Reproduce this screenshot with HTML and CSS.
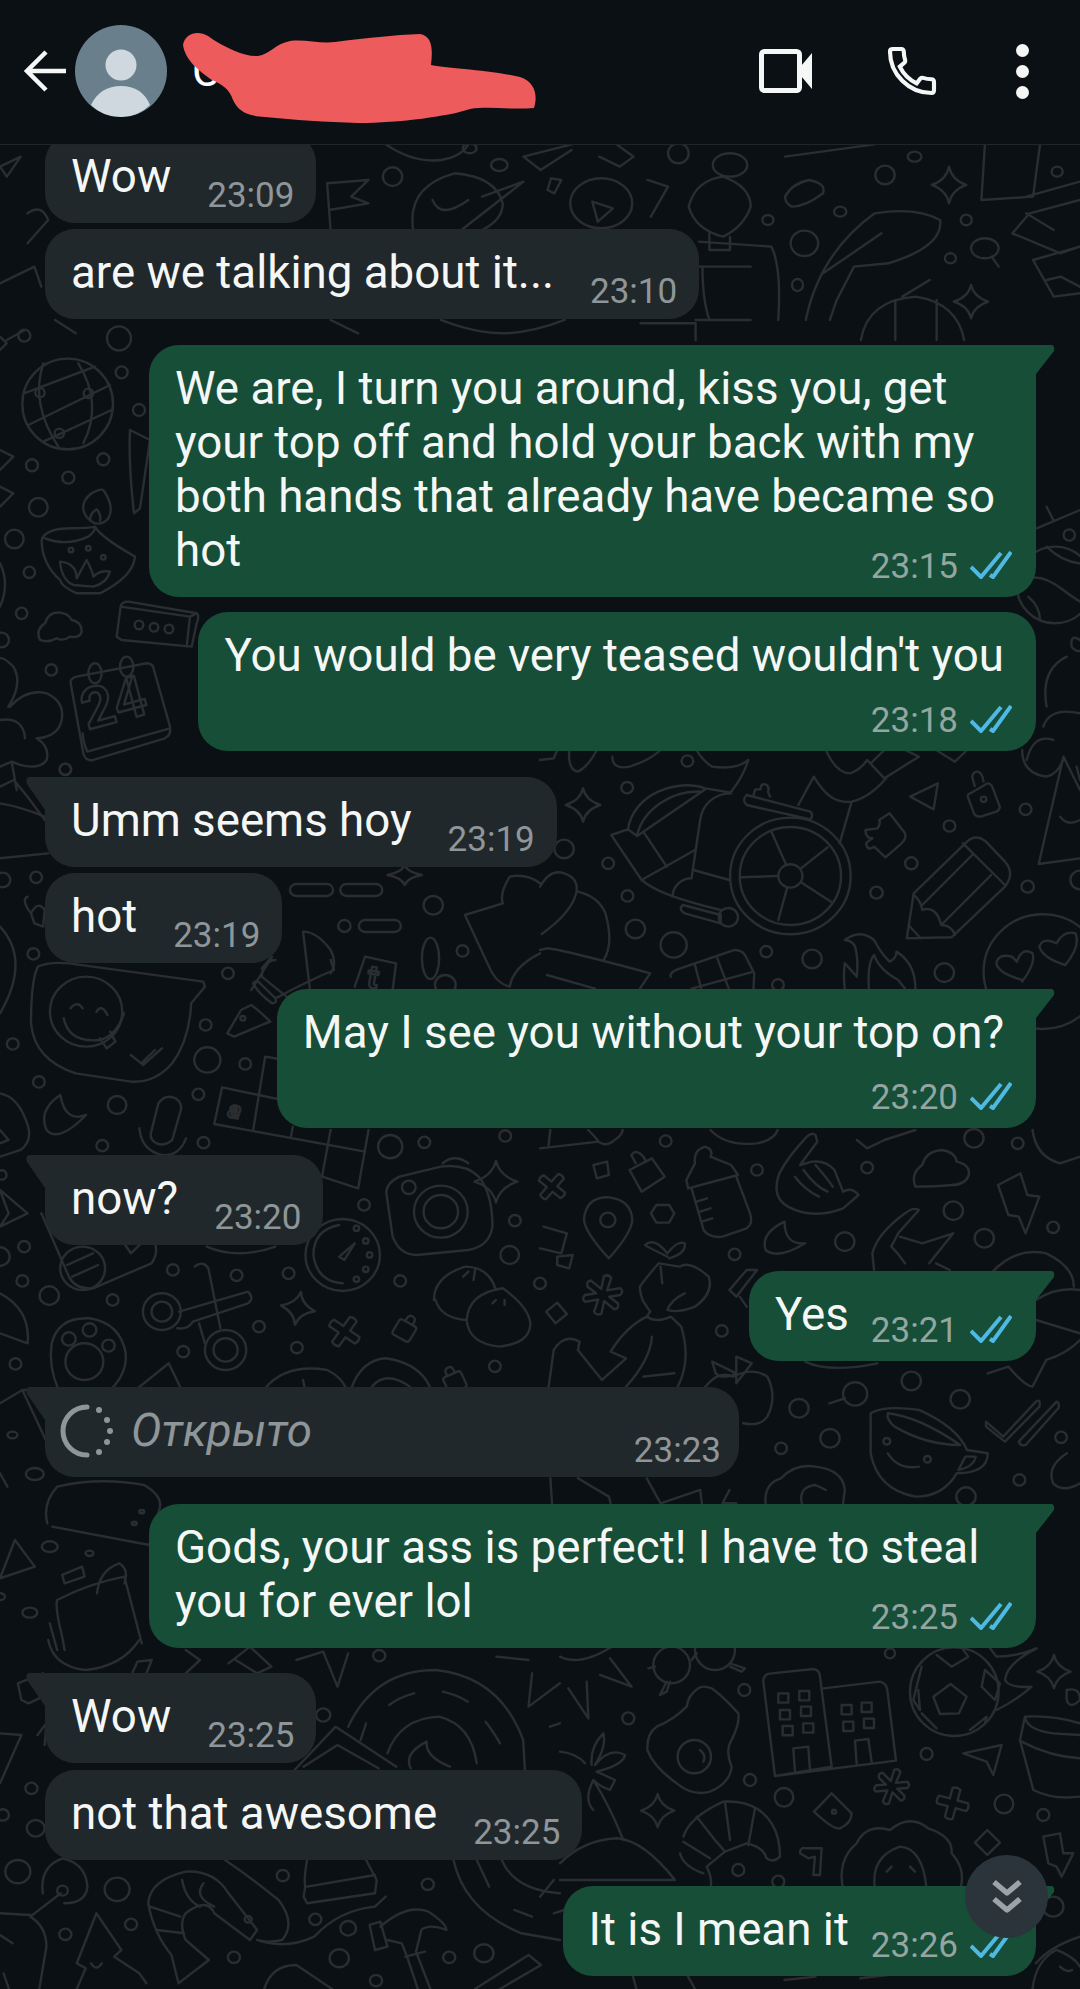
FILE: index.html
```html
<!DOCTYPE html>
<html>
    <head>
        <meta charset="utf-8">
        <title>Chat</title>
        <link rel="stylesheet" href="styles.css">
    </head>
    <body>
        <div class="page">
            <!-- wallpaper: paths are in the pixel units of each region, the group maps them to the page -->
            <svg class="doodles" width="1080" height="1989" viewBox="0 0 1080 1989">
                <defs>
                    <path id="spark" d="M0-50Q8-14 50 0Q8 14 0 50Q-8 14-50 0Q-8-14 0-50Z"/>
                    <path id="plus" d="M-12-45Q0-52 12-45V-12H45Q52 0 45 12H12V45Q0 52-12 45V12H-45Q-52 0-45-12H-12Z"/>
                    <path id="aster" d="M-10-50Q0-60 10-50L8-15L40-30Q52-25 45-12L18 0L45 12Q52 25 40 30L8 15L10 50Q0 60-10 50L-8 15L-40 30Q-52 25-45 12L-18 0L-45-12Q-52-25-40-30L-8-15Z"/>
                    <path id="lock" d="M-35-20Q-35-30-25-30H25Q35-30 35-20V25Q35 35 25 35H-25Q-35 35-35 25ZM-15-30V-42Q-15-58 0-58Q15-58 15-42V-30"/>
                </defs>

                <g transform="scale(.6887,.3333)">
                    <path d="M560 433Q600 490 640 480Q670 470 680 433M760 470L830 433M760 470L785 510L830 450M870 470L900 500L920 470L895 433M1140 470L1270 433M1430 435L1425 600L1500 590L1510 435M1495 640L1568 600M1495 640L1470 700L1540 760L1568 740"/>
                    <path d="M475 550L535 540L510 590L535 610L478 630M475 550L480 690"/>
                    <path d="M600 690Q590 560 660 520Q720 530 730 610Q730 660 700 690M628 600Q640 660 680 600M670 690L760 545L700 590"/>
                    <ellipse cx="873" cy="610" rx="45" ry="75"/>
                    <path d="M860 605L890 625L868 665Z"/>
                    <path d="M940 540L970 560L945 650M800 535L815 540L805 580L795 570Z"/>
                    <path d="M1000 620Q1010 540 1050 530Q1090 560 1090 620Q1080 680 1050 710Q1010 690 1000 620ZM1030 700V750H1060V710M1015 725L1120 740Q1135 800 1130 960M1010 960H1090M1010 800H1090M1030 960Q1020 900 1020 800"/>
                    <ellipse cx="1060" cy="495" rx="25" ry="35"/>
                    <path d="M1140 590Q1150 550 1175 540Q1200 550 1195 580Q1170 620 1150 620Q1140 610 1140 590Z"/>
                    <path d="M1170 960Q1190 760 1270 640Q1330 620 1365 660Q1370 740 1290 790L1240 800L1215 900L1205 960M1195 820L1280 700"/>
                    <path d="M1250 1020Q1260 900 1330 890Q1390 910 1400 1020M1310 890L1350 840M1300 900V1020M1360 900V1020"/>
                    <path d="M1490 590L1568 545M1490 640L1530 690"/>
                    <ellipse cx="1430" cy="745" rx="20" ry="30"/>
                    <path d="M1440 770L1450 800M1500 780L1568 740M1500 780L1530 890L1568 880M1520 840L1540 830L1568 860"/>
                    <path d="M640 960Q690 1000 730 1000Q770 1000 820 960M480 960L520 1000M930 970H1010V1020M80 960L110 1000M0 500L30 470L10 530ZM40 640Q60 610 70 660L40 730M0 850L50 800L60 860"/>
                    <ellipse cx="570" cy="530" rx="14" ry="28"/><ellipse cx="725" cy="495" rx="12" ry="18"/><ellipse cx="682" cy="445" rx="10" ry="15"/><ellipse cx="985" cy="460" rx="15" ry="30"/>
                    <ellipse cx="1285" cy="525" rx="14" ry="28"/><ellipse cx="1328" cy="470" rx="10" ry="15"/><ellipse cx="1220" cy="635" rx="9" ry="15"/><ellipse cx="1115" cy="660" rx="8" ry="15"/>
                    <ellipse cx="1380" cy="775" rx="8" ry="15"/><ellipse cx="1403" cy="660" rx="8" ry="16"/><ellipse cx="1535" cy="515" rx="8" ry="15"/><ellipse cx="1168" cy="730" rx="20" ry="38"/><ellipse cx="1158" cy="855" rx="8" ry="18"/>
                    <use href="#spark" transform="translate(1378,555) scale(.5,1.1)"/>
                    <use href="#spark" transform="translate(1410,905) scale(.5,1)"/>
                </g>

                <g transform="translate(700,500) scale(.3333)">
                    <circle cx="1065" cy="255" r="115"/>
                    <path d="M950 260Q1000 200 1090 270T1180 300M985 290Q1020 320 1020 360M1040 140Q1100 200 1180 190"/>
                    <circle cx="1108" cy="105" r="17"/>
                    <path d="M1010 85L1140 30M1060 60L1040 20M1140 420Q1110 400 1115 440Q1130 460 1150 450"/>
                    <path d="M1040 620Q1020 510 1100 470M980 780Q1000 700 1060 720M1140 640Q1050 620 1030 680M1130 800L1140 840"/>
                </g>

                <g transform="translate(0,330) scale(.3333)">
                    <circle cx="203" cy="222" r="136"/>
                    <path d="M72 190L285 110M85 285L330 165M130 335L335 240M130 100Q90 220 175 350M235 100Q310 220 250 340"/>
                    <circle cx="120" cy="188" r="14"/><circle cx="265" cy="190" r="14"/><circle cx="178" cy="310" r="14"/>
                    <circle cx="73" cy="17" r="18"/><circle cx="357" cy="25" r="36"/><circle cx="365" cy="127" r="18"/><circle cx="417" cy="240" r="18"/><circle cx="310" cy="388" r="18"/><circle cx="96" cy="406" r="18"/><circle cx="205" cy="443" r="18"/><circle cx="115" cy="532" r="28"/><circle cx="43" cy="627" r="28"/><circle cx="88" cy="727" r="17"/><circle cx="65" cy="850" r="17"/><circle cx="154" cy="1020" r="17"/><circle cx="196" cy="1318" r="17"/><circle cx="5" cy="930" r="22"/>
                    <path d="M285 580C245 560 235 520 275 490Q300 475 310 480Q345 530 325 565Q310 585 285 580M270 572Q270 550 290 538Q305 555 300 572"/>
                    <path d="M125 630Q135 595 215 595Q265 595 285 590Q300 620 405 680Q400 740 300 790H230Q185 770 180 750Q125 700 125 630ZM135 625Q200 650 265 620Q285 605 285 590M180 695Q230 700 230 745L260 690Q280 730 280 740Q300 720 330 725Q320 760 280 770L220 765Q185 750 180 695Z"/>
                    <circle cx="213" cy="660" r="7"/><circle cx="265" cy="655" r="7"/><circle cx="310" cy="682" r="7"/>
                    <path d="M120 930Q105 900 135 880Q145 845 180 848Q205 850 215 870Q245 875 245 905Q240 925 210 920Q190 935 170 925Q145 940 120 930Z"/>
                    <path d="M350 920L362 830Q365 815 385 815L590 850Q600 855 590 880L575 950L365 930ZM362 830L570 860L590 850M570 860L560 950"/>
                    <circle cx="417" cy="885" r="13"/><circle cx="462" cy="892" r="13"/><circle cx="507" cy="897" r="13"/>
                    <path d="M212 1060Q210 1045 230 1040L440 1000Q460 1000 462 1020L510 1190Q515 1215 495 1225L280 1290Q255 1295 250 1270ZM248 1210Q250 1240 262 1265L510 1195"/>
                    <ellipse cx="285" cy="1030" rx="20" ry="30"/><ellipse cx="380" cy="1010" rx="20" ry="30"/>
                    <text class="doodle-text" x="262" y="1200" font-size="170" transform="rotate(-15 262 1200)">24</text>
                    <path d="M390 300L450 330L420 535L402 550Q385 400 390 300M75 0L20 30M0 360L40 380L0 420M0 470L40 490L0 530M0 700Q30 760 0 830M0 20L20 40L0 60"/>
                    <path d="M25 1130Q70 1060 40 1010Q10 980 0 985M30 1130Q80 1075 140 1090Q195 1115 185 1170Q175 1220 110 1225Q150 1250 140 1290Q120 1320 60 1305L35 1295L0 1310M0 1170Q70 1160 75 1225M35 1295L50 1380"/>
                </g>

                <g transform="translate(540,750) scale(.3444,.3333)">
                    <circle cx="727" cy="378" r="175"/><circle cx="727" cy="378" r="147"/><circle cx="727" cy="378" r="35"/>
                    <path d="M672 245L715 345M835 292L758 355M845 455L760 398M692 510L718 412M585 382L690 378"/>
                    <path d="M255 240C270 130 400 85 480 115L555 128M282 255C300 180 380 120 470 125M207 255L255 238L282 258L480 118M207 255L295 390L450 300M300 245L368 350M295 390C330 420 385 445 525 480M555 130C500 130 470 170 465 210L440 385C410 385 385 410 385 440M445 360L550 390"/>
                    <path d="M600 135L785 185Q795 195 785 208L600 165Q585 150 600 135ZM620 135L625 118H640Q640 100 655 103Q668 110 662 125L668 140"/>
                    <path d="M415 465L525 495V520L420 490Q400 478 415 465"/>
                    <circle cx="547" cy="502" r="28"/>
                    <path d="M750 165L795 80C830 140 860 160 905 155C950 145 980 115 1005 85M905 155L870 280M555 125Q590 80 605 30Q570 60 500 50Q470 30 455 0M830 0Q860 70 900 70Q930 60 950 30L1000 85L1100 20L1060 0M960 40L1000 0"/>
                    <path d="M85 0Q80 60 110 65Q140 50 165 0M210 20Q210 60 260 50Q320 30 350 0M0 30L40 25L50 0"/>
                    <path d="M1240 275L1085 430L1065 565L1195 562L1350 410Q1380 370 1350 335L1295 275Q1265 250 1240 275ZM1228 280L1350 405M1255 315L1110 465M1310 375L1165 525M1085 435Q1105 450 1110 480Q1150 465 1165 525Q1195 525 1205 555M1070 525L1105 565"/>
                    <path d="M1015 190L1060 250Q1065 265 1050 280L1003 322L970 290Q950 305 947 280Q955 270 965 265Q945 265 945 240L980 235Q990 220 985 210Z"/>
                    <path d="M1250 130L1300 100Q1310 100 1315 115L1335 170Q1335 180 1325 185L1280 200Q1265 200 1260 190L1242 140Q1242 130 1250 130ZM1262 108L1255 80Q1258 63 1272 65Q1285 70 1288 95"/>
                    <circle cx="1288" cy="148" r="8"/>
                    <path d="M1075 140L1155 100L1143 178Z"/>
                    <use href="#spark" transform="translate(125,165)"/>
                    <circle cx="1460" cy="665" r="172"/>
                    <path d="M1400 690Q1330 670 1325 640Q1330 610 1370 620L1385 635Q1400 590 1430 610Q1440 640 1400 695ZM1525 645Q1460 625 1450 590Q1460 560 1500 580Q1520 540 1555 550Q1570 590 1525 645Z"/>
                    <path d="M0 410Q30 355 70 370Q115 385 105 430Q90 490 5 552M110 425Q170 440 190 490Q215 580 185 630M0 600L20 595Q50 595 320 670L290 716M20 675L160 716"/>
                    <path d="M380 680Q375 670 395 660L565 600Q585 600 595 615L622 670L620 716M450 645L468 716M515 625L548 716M440 716L620 665"/>
                    <path d="M885 570Q930 535 970 570Q990 610 1015 635Q1035 625 1035 605Q1090 640 1090 716M955 716Q950 640 970 615Q985 660 1040 690L1060 716M885 640L920 680Q925 630 915 590Q905 570 885 570M885 640Q880 680 885 716"/>
                    <path d="M1520 20L1448 342L1568 325M1520 20L1568 120M1400 0Q1400 70 1470 80Q1510 70 1520 20M1510 200Q1530 230 1568 210M1150 0L1205 35L1240 0"/>
                    <circle cx="253" cy="113" r="17"/><circle cx="428" cy="33" r="17"/><circle cx="70" cy="297" r="28"/><circle cx="198" cy="340" r="17"/><circle cx="254" cy="438" r="17"/><circle cx="277" cy="537" r="28"/><circle cx="388" cy="585" r="38"/><circle cx="657" cy="605" r="17"/><circle cx="790" cy="627" r="28"/><circle cx="691" cy="705" r="17"/><circle cx="1174" cy="668" r="28"/><circle cx="977" cy="428" r="18"/><circle cx="1078" cy="340" r="18"/><circle cx="1189" cy="228" r="17"/><circle cx="1410" cy="178" r="17"/><circle cx="1416" cy="410" r="18"/><circle cx="1568" cy="390" r="28"/>
                </g>

                <g transform="translate(0,760) scale(.3444,.3333)">
                    <circle cx="190" cy="28" r="17"/><circle cx="105" cy="352" r="17"/><circle cx="8" cy="360" r="22"/><circle cx="97" cy="582" r="17"/><circle cx="662" cy="640" r="17"/>
                    <path d="M0 80L40 60L80 110L130 180M0 130Q60 140 130 170M0 295L140 280M90 460Q60 420 80 410M90 460Q110 420 130 450L125 500L100 490ZM900 690L880 515Q920 515 960 570Q980 610 960 640M1030 680L1060 590L1150 610L1140 690"/>
                    <rect class="pill" x="842" y="372" width="125" height="36" rx="18"/><rect class="pill" x="988" y="372" width="122" height="36" rx="18"/><rect class="pill" x="1042" y="480" width="122" height="36" rx="18"/>
                    <circle cx="1000" cy="498" r="18"/><circle cx="1258" cy="436" r="28"/><circle cx="1343" cy="573" r="17"/>
                    <use href="#spark" transform="translate(1175,345) scale(1,.6)"/>
                    <ellipse cx="1250" cy="595" rx="25" ry="62"/>
                    <circle cx="1293" cy="675" r="30"/>
                    <path d="M1350 465L1460 430Q1450 400 1480 350Q1530 340 1568 370M1350 465L1420 620Q1440 670 1480 680Q1490 620 1568 580"/>
                    <text class="doodle-text" x="1062" y="680" font-size="95" transform="rotate(10 1062 680)">t</text>
                    <path d="M730 690L790 590Q760 620 760 650M760 650L880 750"/>
                    <path d="M0 500Q90 600 0 760"/>
                </g>

                <g transform="translate(0,960) scale(.3444,.3333)">
                    <path d="M110 20Q90 60 90 190Q100 300 220 340L380 365Q450 370 500 310Q550 240 555 130L595 80L590 65L200 10Q140 5 110 20Z"/>
                    <circle cx="250" cy="155" r="105"/>
                    <path d="M205 145Q225 120 240 145M280 155Q295 130 312 165M185 175Q200 250 290 240Q340 225 360 160M290 235L310 265L335 245L320 215M380 285L410 310L450 270M415 315L470 265"/>
                    <circle cx="37" cy="252" r="17"/><circle cx="113" cy="366" r="17"/><circle cx="597" cy="195" r="17"/><circle cx="602" cy="300" r="38"/><circle cx="712" cy="312" r="17"/><circle cx="576" cy="403" r="17"/><circle cx="340" cy="435" r="27"/><circle cx="591" cy="548" r="17"/><circle cx="297" cy="557" r="17"/><circle cx="1057" cy="735" r="17"/><circle cx="1133" cy="560" r="35"/><circle cx="1232" cy="547" r="17"/><circle cx="1467" cy="528" r="17"/><circle cx="1495" cy="782" r="17"/><circle cx="1480" cy="885" r="27"/><circle cx="1162" cy="963" r="17"/><circle cx="838" cy="940" r="17"/><circle cx="687" cy="946" r="17"/><circle cx="502" cy="930" r="17"/><circle cx="70" cy="860" r="17"/><circle cx="65" cy="963" r="17"/><circle cx="143" cy="1007" r="28"/><circle cx="327" cy="1020" r="17"/><circle cx="752" cy="1100" r="17"/><circle cx="862" cy="1163" r="17"/><circle cx="532" cy="1175" r="17"/><circle cx="45" cy="1212" r="17"/><circle cx="1437" cy="1219" r="17"/><circle cx="0" cy="890" r="28"/><circle cx="5" cy="645" r="14"/>
                    <path d="M175 405Q110 450 135 510Q170 550 250 465Q190 490 175 405Z"/>
                    <path d="M438 520L460 430Q480 400 510 415Q530 430 525 450L500 540Q480 560 455 550Q435 540 438 520ZM405 505Q410 570 470 585Q520 590 540 535"/>
                    <path d="M770 290L735 510M645 382L622 492L1060 575M645 382L820 420M770 290L810 297M960 510L935 650L1040 685L1070 510M850 500L845 530"/>
                    <text class="doodle-text" x="660" y="470" font-size="70" font-style="italic" transform="rotate(10 660 470)">a</text>
                    <path d="M660 220L700 150L730 135Q750 150 785 185L760 195L680 230ZM735 70Q745 55 760 75L800 115Q805 130 790 130Q750 100 735 70M760 25Q780 0 800 0M800 115Q900 60 970 30L960 0"/>
                    <circle cx="705" cy="175" r="7"/>
                    <path d="M0 400Q50 410 75 480Q100 540 60 570L0 590M0 510L25 540L0 550M0 690L80 760L0 800L25 760Z"/>
                    <path d="M1122 700Q1120 670 1160 650L1280 620Q1350 610 1390 650Q1430 700 1430 800Q1420 860 1360 870L1210 885Q1160 885 1140 830ZM1285 610Q1320 580 1360 610"/>
                    <circle cx="1280" cy="755" r="78"/><circle cx="1280" cy="755" r="50"/><circle cx="1187" cy="682" r="20"/>
                    <use href="#spark" transform="translate(1440,665) scale(1.25)"/>
                    <circle cx="995" cy="885" r="108"/>
                    <path d="M985 795Q910 810 910 885Q920 965 995 970M985 890L1030 850L1000 900Z"/>
                    <circle cx="1035" cy="805" r="8"/><circle cx="1062" cy="843" r="8"/><circle cx="1073" cy="885" r="8"/><circle cx="1062" cy="928" r="8"/><circle cx="1035" cy="958" r="8"/>
                    <path d="M1260 1020Q1260 950 1350 920Q1420 920 1440 990M1265 1020Q1280 1075 1355 1080M1355 1080Q1360 1000 1460 985Q1535 1040 1540 1090Q1540 1150 1450 1160Q1360 1150 1355 1080ZM1345 950L1360 935M1375 960L1380 925M1440 1020L1430 1030M1465 1035L1465 1020"/>
                    <circle cx="470" cy="1055" r="55"/><circle cx="470" cy="1055" r="30"/><circle cx="655" cy="1170" r="60"/><circle cx="655" cy="1170" r="35"/>
                    <path d="M565 920Q590 900 605 925L640 1105M520 1055L720 995Q740 1015 720 1030L560 1085Q545 1110 515 1105M578 1090L595 1150"/>
                    <path d="M150 1150Q170 1070 260 1075Q350 1090 365 1180Q370 1240 320 1290M150 1150Q140 1220 170 1290"/>
                    <circle cx="200" cy="1137" r="20"/><circle cx="260" cy="1110" r="20"/><circle cx="315" cy="1157" r="18"/><circle cx="245" cy="1205" r="55"/>
                    <use href="#spark" transform="translate(865,1045) rotate(10)"/>
                    <use href="#plus" transform="translate(1000,1115) rotate(35)"/>
                    <use href="#lock" transform="translate(1175,1110) rotate(30) scale(.8)"/>
                    <use href="#lock" transform="translate(1320,1265) rotate(-25) scale(.8)"/>
                    <path d="M120 760L200 950Q220 990 270 985L440 910Q460 880 450 850M195 915L270 880M210 950L285 915M360 850L380 880L410 850"/>
                    <circle cx="240" cy="925" r="65"/>
                    <path d="M600 860Q690 900 800 860M0 1000Q90 1050 80 1150L0 1120M70 1290L220 1285M400 1285L490 1210L525 1285M770 1285Q830 1210 950 1230Q990 1250 1005 1285M880 1260L885 1285M1020 1285Q1050 1200 1120 1195Q1220 1210 1250 1285M1080 1280Q1120 1230 1190 1280"/>
                </g>

                <g transform="translate(540,1120) scale(.3444,.3333)">
                    <use href="#plus" transform="translate(35,200) rotate(40) scale(.9)"/>
                    <path d="M260 150L325 115L362 170L295 215ZM278 130L265 105Q280 85 300 110L308 125"/>
                    <path d="M155 135L195 125L200 165L165 175Z"/>
                    <path d="M450 130Q445 90 480 80Q505 90 495 110L555 135L575 165L430 205L425 180ZM440 205L475 330Q490 355 530 350L600 325Q620 310 610 280L570 170M455 245L485 235M465 275L495 265M470 305L500 295"/>
                    <path d="M800 45Q790 35 775 50Q720 110 695 160Q670 230 720 260Q790 300 880 265L925 225Q905 200 880 215L855 150Q830 120 790 125L755 135L805 65ZM740 170Q770 210 810 230M765 150Q800 200 835 215M800 135Q830 170 850 200"/>
                    <path d="M1090 200Q1075 160 1110 135Q1120 95 1165 90Q1205 95 1210 125Q1250 135 1245 165Q1235 195 1195 195Q1150 200 1090 200Z"/>
                    <path d="M1330 195L1395 160L1415 225L1450 230L1410 340L1390 290L1360 285Z"/>
                    <path d="M200 415Q125 330 128 295Q135 230 200 232Q265 240 268 300Q265 340 200 415Z"/>
                    <circle cx="197" cy="300" r="22"/>
                    <path d="M338 255L375 255L390 280L375 308H338L322 280Z"/>
                    <path d="M10 320L78 340L62 400L0 385M50 410L95 405L85 445L50 435ZM18 575L50 548L78 582L45 610Z"/>
                    <use href="#aster" transform="translate(182,525) rotate(15) scale(1.1)"/>
                    <path d="M710 305Q640 340 655 390Q690 420 770 370Q710 375 710 305Z"/>
                    <path d="M1100 270Q1085 260 1060 280Q980 340 965 400L970 450M1100 270L1040 340L1020 380Q1040 400 1060 430M1045 350L1110 370L1200 340L1130 430M1150 430L1190 450"/>
                    <path d="M370 410Q310 380 305 375Q330 350 370 400Q400 360 420 370Q425 400 375 415M345 430Q310 470 290 500Q290 520 300 545L320 575L310 590Q340 610 380 590L410 620Q440 720 400 800M345 430L405 440Q435 420 490 470Q505 520 450 560Q400 580 370 570Q380 540 420 520M350 440L355 490M310 590Q250 620 205 695L250 715L180 780L110 690L115 665Q70 640 40 690L25 800M300 770L390 760M325 650Q320 720 250 800"/>
                    <path d="M600 450L630 450L570 530L550 510ZM580 530L600 560"/>
                    <path d="M480 800Q520 750 560 770Q620 740 660 770Q690 830 660 890Q640 920 590 910M500 725L570 760Q530 780 510 760ZM570 710L615 730L570 790Z"/>
                    <circle cx="915" cy="822" r="35"/>
                    <path d="M885 835L840 850M770 725Q840 760 980 730"/>
                    <circle cx="365" cy="63" r="17"/><circle cx="630" cy="150" r="17"/><circle cx="950" cy="143" r="17"/><circle cx="565" cy="403" r="17"/><circle cx="528" cy="633" r="17"/><circle cx="1260" cy="55" r="28"/><circle cx="1387" cy="70" r="17"/><circle cx="1200" cy="272" r="28"/><circle cx="885" cy="365" r="28"/><circle cx="1290" cy="355" r="28"/><circle cx="1490" cy="322" r="17"/><circle cx="1078" cy="783" r="28"/><circle cx="1220" cy="838" r="28"/><circle cx="752" cy="865" r="28"/><circle cx="842" cy="955" r="28"/><circle cx="700" cy="985" r="17"/><circle cx="1513" cy="952" r="17"/><circle cx="1392" cy="1080" r="17"/><circle cx="1237" cy="1130" r="28"/><circle cx="0" cy="490" r="17"/>
                    <path d="M960 880Q1000 855 1100 870Q1210 920 1240 990L1300 1000Q1300 1060 1210 1060Q1170 1130 1090 1130Q980 1110 960 1000ZM1010 880Q1100 890 1220 975Q1120 975 1030 920Q1005 900 1010 880ZM1010 1000Q1040 1050 1100 1040M1215 1050L1235 1010H1265Q1260 1040 1215 1050"/>
                    <circle cx="1007" cy="964" r="10"/><circle cx="1125" cy="1018" r="10"/>
                    <path d="M1295 905L1345 950L1440 845Q1455 835 1450 860L1350 965L1295 920ZM1390 965L1500 845Q1510 850 1505 865L1410 975Q1395 980 1390 965Z"/>
                    <path d="M655 1150Q650 1090 700 1075Q740 1030 800 1040Q880 1050 885 1110L880 1150M760 1150Q750 1100 800 1095L830 1110"/>
                    <path d="M1530 1000Q1470 1040 1490 1090Q1520 1120 1568 1090"/>
                    <path d="M1310 460Q1380 380 1470 400Q1550 440 1550 500M1440 540Q1500 500 1568 510M1440 600L1568 640M1300 760L1360 740Q1410 800 1430 800L1470 720Q1530 700 1568 660"/>
                    <path d="M495 30Q540 80 630 70Q680 60 690 30M0 85L170 65Q190 80 210 65Q240 45 240 30M140 30Q160 50 170 65M30 30L25 75M920 60L950 85L1000 60L1090 30M1430 30Q1440 110 1510 130L1568 110"/>
                    <path d="M30 1075L35 1150M110 1075L200 1130L205 1150M310 1075L350 1150L465 1110L470 1150M550 1110L530 1150L570 1150"/>
                </g>

                <g transform="translate(0,1370) scale(.4974,.3333)">
                    <path d="M45 60L95 220M45 60L0 100M95 460Q85 400 115 350Q200 320 290 345Q330 380 320 420L300 525L105 470M115 690Q110 710 125 800L130 840M115 690Q180 640 250 620L285 820M125 615L165 590L170 620L130 640ZM195 670Q200 600 240 580Q260 600 250 640M0 625L30 510L70 590ZM0 310L15 350M100 760L115 840"/>
                    <circle cx="70" cy="312" r="18"/><circle cx="25" cy="195" r="10"/><circle cx="100" cy="530" r="16"/><circle cx="180" cy="550" r="8"/><circle cx="60" cy="728" r="15"/><circle cx="0" cy="680" r="10"/>
                    <circle cx="270" cy="460" r="5"/><circle cx="285" cy="425" r="5"/>
                </g>

                <g transform="translate(0,1640) scale(.3571,.3333)">
                    <path d="M975 260Q1050 90 1220 90Q1400 110 1465 300L1470 390M1090 195Q1120 170 1160 160M1240 155Q1280 165 1310 185M1360 245Q1385 280 1400 310M1025 250L1010 300M1085 340Q1120 235 1230 230Q1320 255 1335 370M1150 385Q1130 340 1195 305Q1190 350 1260 380"/>
                    <path d="M1270 660Q1300 810 1460 880L1568 900M1335 660L1370 740M1405 660Q1440 750 1568 760M1440 810L1490 830"/>
                    <path d="M825 390L940 260L1110 380M850 380L945 315L1060 385"/>
                    <path d="M860 660Q850 720 855 740L850 770L860 790L1050 760L1055 720L1025 660M860 740L1050 705"/>
                    <path d="M415 790Q420 720 520 695Q600 690 640 760L720 870L700 900L600 820Q580 770 520 820Q500 850 520 900L585 960L500 1030L480 945Q430 880 415 790ZM510 720Q520 780 560 800M570 730Q540 770 600 800M420 800L505 830M440 870L515 880"/>
                    <path d="M630 660Q700 710 780 780Q830 850 790 900Q750 910 720 900M720 900Q800 930 880 890Q950 810 1050 800L1080 770"/>
                    <circle cx="695" cy="838" r="10"/>
                    <path d="M1035 855L1065 845L1085 920L1050 930ZM1065 860Q1140 790 1200 815Q1250 850 1250 870Q1200 850 1180 870L1165 935L1205 1047M1085 900L1125 910L1140 950L1170 1047M1135 950L1190 935"/>
                    <path d="M270 820L340 930L320 950L390 1000L410 1030M270 820L215 970L240 985L215 1047M255 970Q270 995 285 970"/>
                    <path d="M85 830Q130 860 130 920L110 1047M85 830L170 760M120 760Q110 680 175 655Q240 670 245 740Q240 790 180 790M0 820L85 825M0 885L35 910M10 1000L25 1047"/>
                    <circle cx="175" cy="752" r="15"/>
                    <circle cx="50" cy="695" r="35"/><circle cx="328" cy="748" r="35"/><circle cx="88" cy="445" r="17"/><circle cx="8" cy="525" r="17"/><circle cx="100" cy="565" r="25"/><circle cx="367" cy="853" r="17"/><circle cx="183" cy="883" r="17"/><circle cx="792" cy="707" r="17"/><circle cx="883" cy="838" r="17"/><circle cx="1198" cy="733" r="17"/><circle cx="1062" cy="47" r="17"/><circle cx="975" cy="865" r="22"/><circle cx="655" cy="952" r="17"/><circle cx="950" cy="955" r="27"/><circle cx="1258" cy="952" r="17"/><circle cx="1355" cy="940" r="27"/><circle cx="1053" cy="1022" r="17"/><circle cx="905" cy="225" r="20"/>
                    <path d="M135 0Q150 80 240 90Q340 80 390 0M370 100L385 65L425 60L410 100M520 30L560 60L520 100M640 70L700 20L760 80L720 100L660 60M830 60L905 35L945 140L975 40M50 130L120 100L120 170L80 190L60 180ZM0 280L60 285L0 430M105 285L130 250L125 315"/>
                    <path d="M1330 1047L1480 945L1515 975L1400 1047M740 1047Q760 975 830 975L930 1047M1390 50L1480 60M1490 100L1480 200L1568 130M1568 250L1540 260"/>
                </g>

                <g transform="translate(560,1640) scale(.3333)">
                    <circle cx="335" cy="75" r="55"/><circle cx="465" cy="30" r="60"/>
                    <path d="M395 60L410 40M265 85L285 80M320 125L300 165L320 155L330 125M510 70L555 85L545 95L510 80"/>
                    <path d="M150 55L215 140L120 105M25 145L85 235L80 125M0 50Q60 80 155 20"/>
                    <path d="M415 145Q385 165 380 200Q340 240 290 260Q260 280 262 330Q280 380 350 430Q400 470 450 455Q510 430 515 380Q495 330 515 300Q540 250 535 220Q490 170 455 145Q430 135 415 145Z"/>
                    <circle cx="403" cy="350" r="50"/>
                    <path d="M420 330Q440 345 430 365"/>
                    <path d="M610 125Q610 100 635 100L760 87Q780 90 780 110L815 380L645 408ZM790 145L960 125Q980 130 982 150L1008 362L645 408M705 395L700 325L745 320L750 390M890 370L885 302L925 297L935 365"/>
                    <path d="M655 160h30v28h-30zM718 153h30v28h-30zM660 210h30v28h-30zM723 200h30v28h-30zM668 258h30v28h-30zM730 250h30v28h-30zM845 195h30v28h-30zM905 188h30v28h-30zM850 245h30v28h-30zM912 236h30v28h-30z"/>
                    <circle cx="1183" cy="155" r="133"/>
                    <path d="M1172 132L1220 170L1197 220L1140 222L1120 170ZM1130 45L1175 80L1225 50L1205 22M1275 90L1320 130L1305 180L1265 140ZM1085 80L1060 180L1080 210L1075 150M1085 220L1130 265M1230 270L1280 230L1275 250"/>
                    <path d="M1290 25L1310 50Q1370 50 1430 25Q1340 70 1335 120Q1350 145 1415 140Q1370 180 1310 210"/>
                    <use href="#spark" transform="translate(1482,95)"/>
                    <use href="#spark" transform="translate(293,512)"/>
                    <path d="M1395 230L1380 300L1420 450Q1480 480 1560 470M1395 230Q1480 225 1560 250M1385 305Q1470 350 1560 355M1395 230Q1400 270 1480 280L1560 285"/>
                    <path d="M1210 340L1325 315L1300 405L1280 365Z"/>
                    <use href="#aster" transform="translate(995,440) rotate(20)"/>
                    <use href="#plus" transform="translate(1178,490) rotate(15)"/>
                    <path d="M762 515L815 460L875 520Q875 550 840 565Q820 570 762 515Z"/>
                    <circle cx="822" cy="515" r="6"/>
                    <path d="M95 375Q90 320 130 280Q140 320 105 375Q150 320 195 345Q190 375 110 395L165 420L150 450Q120 440 100 420Q70 480 100 510M100 420Q150 500 190 600M0 335Q50 340 75 370M0 720H345Q250 600 170 595Q70 600 0 670"/>
                    <path d="M370 590Q390 530 490 485Q590 480 635 550Q660 590 660 650Q640 670 620 655Q610 620 560 610L495 635L440 680Q460 720 450 750M410 530L465 600L495 635M495 485L510 600M585 505L565 615M370 605L450 655M360 640Q370 680 430 700"/>
                    <circle cx="553" cy="150" r="18"/><circle cx="205" cy="235" r="18"/><circle cx="570" cy="420" r="18"/><circle cx="672" cy="472" r="28"/><circle cx="1100" cy="342" r="18"/><circle cx="1332" cy="492" r="28"/><circle cx="1450" cy="525" r="18"/><circle cx="535" cy="690" r="18"/><circle cx="655" cy="725" r="18"/><circle cx="990" cy="40" r="15"/>
                    <path d="M850 750Q830 660 890 610Q920 550 990 570Q1050 520 1105 565Q1180 590 1175 640Q1220 690 1200 750M945 750Q930 650 1020 620Q1090 625 1100 750M980 695L995 680M1050 680L1065 695"/>
                    <path d="M720 640Q720 620 740 625L785 625L780 705L760 705L765 650L745 655Z"/>
                    <path d="M1282 570L1320 608L1282 645L1245 608Z"/>
                    <path d="M1450 590L1500 580L1510 640L1540 640L1505 710L1490 680L1465 670Z"/>
                    <path d="M1520 150Q1560 140 1560 180Q1530 210 1520 180Z"/>
                </g>

                <g transform="translate(540,1780) scale(.3444,.3333)">
                    <circle cx="1490" cy="380" r="30"/>
                    <path d="M1440 550Q1480 500 1568 470M1430 627Q1440 540 1500 510Q1550 530 1568 560M1510 560Q1530 580 1545 570M0 350L40 300M710 600L800 590M930 595L1010 585M40 400L70 390M270 590L280 627M430 590L450 627"/>
                </g>
            </svg>

            <header class="topbar">
                <svg class="back" width="42" height="42" viewBox="0 0 42 42">
                    <path d="M42 21H3M22 2L3 21L22 40"/>
                </svg>
                <svg class="avatar" width="92" height="92" viewBox="0 0 92 92">
                    <circle cx="46" cy="46" r="46" fill="#6a7f8c"/>
                    <circle cx="46" cy="40" r="15.5" fill="#cfd8de"/>
                    <path d="M16 80Q25 61 46 61Q67 61 75 80Q63 92 46 92Q28 92 16 80Z" fill="#cfd8de"/>
                </svg>
                <span class="name">C</span>
                <svg class="scribble" width="380" height="110" viewBox="170 25 380 110">
                    <path d="M183 45C185 33 198 30 208 36C225 48 245 57 258 56C270 54 275 44 290 41C305 39 320 44 335 42C365 38 395 35 420 34C432 36 433 48 431 65C445 68 490 70 520 77C535 82 538 95 534 108C510 110 490 106 470 109C450 116 400 123 358 123C325 122 295 120 265 117C245 116 238 110 233 100C230 90 222 84 212 80C200 72 185 60 183 45Z"/>
                </svg>
                <div class="actions">
                    <svg class="ico-video" width="54" height="44" viewBox="0 0 54 44">
                        <rect x="2.5" y="2.5" width="38" height="39" rx="3"/>
                        <path class="solid" d="M42 17L53 4V40L42 27Z"/>
                    </svg>
                    <svg class="ico-phone" width="44" height="44" viewBox="3 3 18 18">
                        <path d="M20.01 15.38c-1.23 0-2.42-.2-3.53-.56-.35-.12-.74-.03-1.01.24l-1.57 1.97c-2.83-1.35-5.48-3.9-6.89-6.83l1.95-1.66c.27-.28.35-.67.24-1.02-.37-1.11-.56-2.3-.56-3.53 0-.54-.45-.99-.99-.99H4.19C3.65 3 3 3.24 3 3.99 3 13.28 10.73 21 20.01 21c.71 0 .99-.63.99-1.18v-3.45c0-.54-.45-.99-.99-.99z"/>
                    </svg>
                    <div class="menu"><i></i><i></i><i></i></div>
                </div>
            </header>

            <main class="chat">
                <div class="msg in first">
                    <span class="text">Wow</span>
                    <span class="meta"><span class="time">23:09</span></span>
                </div>
                <div class="msg in same">
                    <span class="text">are we talking about it...</span>
                    <span class="meta"><span class="time">23:10</span></span>
                </div>

                <div class="msg out tail stack wide">
                    <span class="text">We are, I turn you around, kiss you, get<br>your top off and hold your back with my<br>both hands that already have became so<br>hot</span>
                    <span class="meta over"><span class="time">23:15</span><svg class="ticks" width="42" height="28" viewBox="0 0 42 28"><path d="M1 16L11 26L31 2M20 24L23 26L41 1"/></svg></span>
                </div>
                <div class="msg out stack near">
                    <span class="text">You would be very teased wouldn't you</span>
                    <span class="meta"><span class="time">23:18</span><svg class="ticks" width="42" height="28" viewBox="0 0 42 28"><path d="M1 16L11 26L31 2M20 24L23 26L41 1"/></svg></span>
                </div>

                <div class="msg in tail">
                    <span class="text">Umm seems hoy</span>
                    <span class="meta"><span class="time">23:19</span></span>
                </div>
                <div class="msg in same">
                    <span class="text">hot</span>
                    <span class="meta"><span class="time">23:19</span></span>
                </div>

                <div class="msg out tail stack">
                    <span class="text">May I see you without your top on?</span>
                    <span class="meta"><span class="time">23:20</span><svg class="ticks" width="42" height="28" viewBox="0 0 42 28"><path d="M1 16L11 26L31 2M20 24L23 26L41 1"/></svg></span>
                </div>

                <div class="msg in tail more">
                    <span class="text">now?</span>
                    <span class="meta"><span class="time">23:20</span></span>
                </div>

                <div class="msg out tail">
                    <span class="text">Yes</span>
                    <span class="meta"><span class="time">23:21</span><svg class="ticks" width="42" height="28" viewBox="0 0 42 28"><path d="M1 16L11 26L31 2M20 24L23 26L41 1"/></svg></span>
                </div>

                <div class="msg in tail opened">
                    <span class="viewed">
                        <svg class="spin" width="54" height="54" viewBox="0 0 54 54">
                            <path d="M27 3A24 24 0 0 0 27 51"/>
                            <circle cx="39" cy="6" r="3"/><circle cx="47" cy="16" r="3"/><circle cx="50" cy="27" r="3"/><circle cx="47" cy="38" r="3"/><circle cx="39" cy="48" r="3"/>
                        </svg>
                        <em class="viewed-label">Открыто</em>
                    </span>
                    <span class="meta"><span class="time">23:23</span></span>
                </div>

                <div class="msg out tail stack wide more">
                    <span class="text">Gods, your ass is perfect! I have to steal<br>you for ever lol</span>
                    <span class="meta over"><span class="time">23:25</span><svg class="ticks" width="42" height="28" viewBox="0 0 42 28"><path d="M1 16L11 26L31 2M20 24L23 26L41 1"/></svg></span>
                </div>

                <div class="msg in tail less">
                    <span class="text">Wow</span>
                    <span class="meta"><span class="time">23:25</span></span>
                </div>
                <div class="msg in same wider">
                    <span class="text">not that awesome</span>
                    <span class="meta"><span class="time">23:25</span></span>
                </div>

                <div class="msg out tail">
                    <span class="text">It is I mean it</span>
                    <span class="meta"><span class="time">23:26</span><svg class="ticks" width="42" height="28" viewBox="0 0 42 28"><path d="M1 16L11 26L31 2M20 24L23 26L41 1"/></svg></span>
                </div>

                <button class="to-bottom">
                    <svg width="32" height="36" viewBox="0 0 32 36"><path d="M3 3L16 14L29 3M3 20L16 31L29 20"/></svg>
                </button>
            </main>
        </div>
    </body>
</html>
```

FILE: styles.css
```css
* {
    box-sizing: border-box;
}
html, body {
    margin: 0;
    padding: 0;
    background: #0b1014;
}
.page {
    position: relative;
    width: 1080px;
    height: 1989px;
    overflow: hidden;
    font-family: Roboto, "Liberation Sans", sans-serif;
    color: #f4f7f6;
}

/* wallpaper */
.doodles {
    position: absolute;
    left: 0;
    top: 0;
}
.doodles * {
    fill: none;
    stroke: #2a2e31;
    stroke-width: 2.4px;
    stroke-linejoin: round;
    stroke-linecap: round;
    vector-effect: non-scaling-stroke;
}
.doodle-text {
    font-family: Roboto, sans-serif;
    font-weight: 700;
}

/* top bar */
.topbar {
    position: relative;
    z-index: 2;
    display: flex;
    align-items: center;
    height: 145px;
    padding: 0 51px 2px 24px;
    background: #0b1014;
    border-bottom: 1px solid #1f2528;
}
.back {
    fill: none;
    stroke: #f4f7f6;
    stroke-width: 4.5px;
    margin-right: 9px;
}
.avatar {
    margin-right: 25px;
}
.name {
    font-size: 44px;
    color: #fff;
}
.scribble {
    position: absolute;
    left: 170px;
    top: 25px;
    fill: #ee5b5d;
}
.actions {
    display: flex;
    align-items: center;
    margin-left: auto;
}
.actions svg {
    fill: none;
    stroke: #f4f7f6;
    overflow: visible;
}
.ico-video {
    stroke-width: 5px;
    margin-right: 77px;
}
.ico-video .solid {
    fill: #f4f7f6;
    stroke: none;
}
.ico-phone {
    stroke-width: 1.7px;
    margin-right: 82px;
}
.menu {
    display: flex;
    flex-direction: column;
    gap: 8px;
}
.menu i {
    display: block;
    width: 13px;
    height: 13px;
    border-radius: 50%;
    background: #f4f7f6;
}

/* messages */
.chat {
    position: relative;
    z-index: 1;
    display: flex;
    flex-direction: column;
    align-items: flex-start;
    padding: 0 44px 0 45px;
}
.msg {
    position: relative;
    display: flex;
    align-items: flex-end;
    margin-top: 26px;
    padding: 17px 22px 0 26px;
    border-radius: 30px;
    white-space: nowrap;
}
.msg.first {
    margin-top: -12px;
}
.msg.same {
    margin-top: 6px;
}
.msg.near {
    margin-top: 15px;
}
.msg.more {
    margin-top: 27px;
}
.msg.less {
    margin-top: 25px;
}
.msg.wider {
    margin-top: 7px;
}
.in {
    background: #21282b;
}
.out {
    align-self: flex-end;
    background: #164e38;
    padding-right: 24px;
}
.text {
    display: block;
    font-size: 45.7px;
    line-height: 54px;
    margin-bottom: 19px;
}
.meta {
    display: flex;
    align-items: flex-start;
    gap: 12px;
    margin-left: 36px;
    padding-bottom: 7px;
}
.out .meta {
    margin-left: 22px;
    padding-bottom: 10px;
}
.time {
    font-size: 35px;
    line-height: 40px;
    color: #8f9699;
}
.out .time {
    color: #95a6a0;
}
.ticks {
    margin-top: 4px;
    fill: none;
    stroke: #4fb8e3;
    stroke-width: 4px;
}

/* tails */
.tail.in {
    border-top-left-radius: 0;
}
.tail.out {
    border-top-right-radius: 0;
}
.tail::before {
    content: "";
    position: absolute;
    top: 0;
    width: 22px;
    height: 34px;
    background: inherit;
}
.tail.in::before {
    left: -19px;
    clip-path: path("M3 0L22 0L22 34L19 33L1 7Q-1 1 3 0Z");
}
.tail.out::before {
    right: -19px;
    clip-path: path("M0 0L19 0Q22 1 21 6L3 29L0 34Z");
}

/* bubbles with the time on a row of its own */
.stack {
    display: block;
}
.stack .text {
    margin: 0 8px 0 0;
}
.stack .meta {
    justify-content: flex-end;
    margin: 18px 0 0;
}
.stack .meta.over {
    margin-top: -31px;
}
.wide {
    width: 887px;
}

/* view once row */
.opened {
    width: 694px;
    padding-left: 15px;
    padding-right: 18px;
    height: 90px;
    justify-content: space-between;
}
.viewed {
    display: flex;
    align-items: center;
    gap: 17px;
    margin-bottom: 19px;
}
.spin {
    fill: none;
    stroke: #8f9699;
    stroke-width: 5px;
    stroke-linecap: round;
    flex: none;
}
.spin circle {
    fill: #8f9699;
    stroke: none;
}
.viewed-label {
    font-size: 45.7px;
    line-height: 54px;
    color: #8f9699;
}
.opened .meta {
    padding-bottom: 6px;
}

/* scroll to bottom */
.to-bottom {
    position: absolute;
    left: 965px;
    top: 1710px;
    display: flex;
    align-items: center;
    justify-content: center;
    width: 83px;
    height: 83px;
    padding: 0;
    border: 0;
    border-radius: 50%;
    background: #2b343b;
}
.to-bottom svg {
    fill: none;
    stroke: #9da3a7;
    stroke-width: 5.5px;
    stroke-linejoin: round;
}
```
